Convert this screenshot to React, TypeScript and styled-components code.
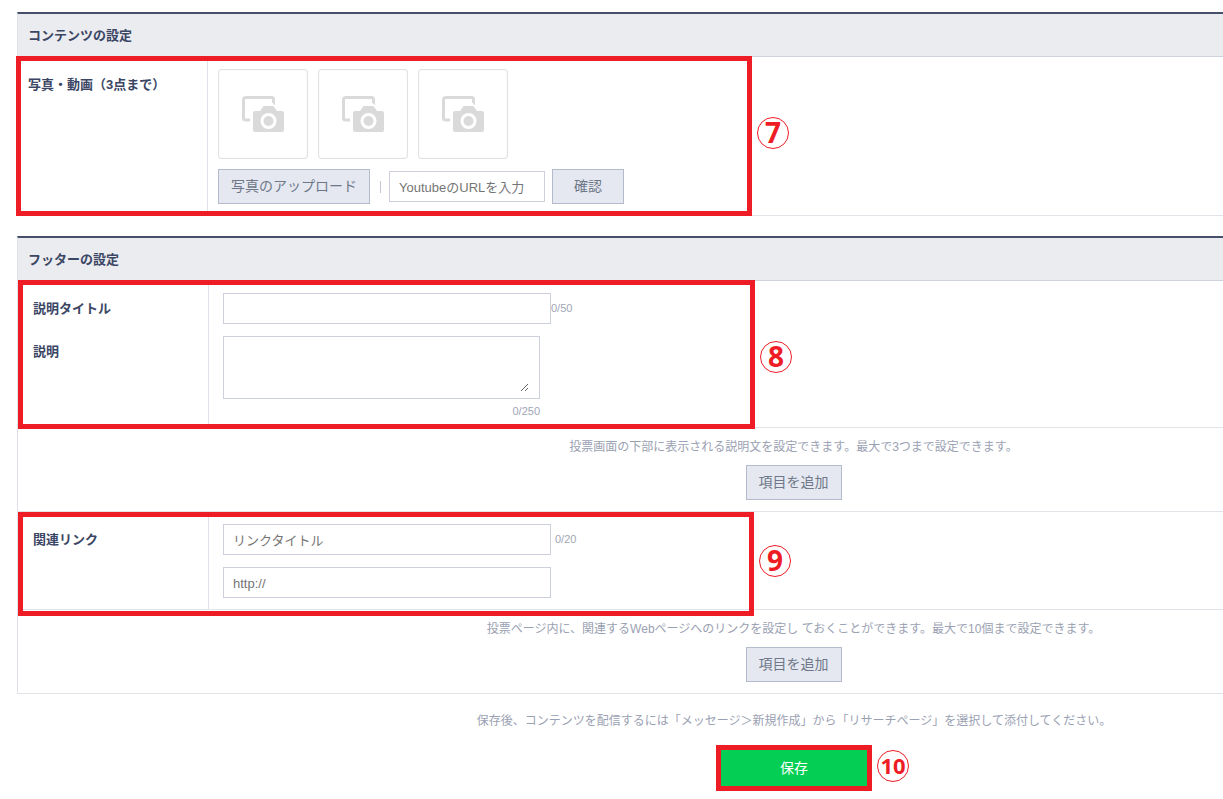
import React from "react";
import styled, { createGlobalStyle } from "styled-components";

const Global = createGlobalStyle`
  * { box-sizing: border-box; }
  body {
    margin: 0;
    background: #fff;
    color: #3b4664;
    font-family: "Liberation Sans", "Noto Sans CJK JP", sans-serif;
    font-size: 13px;
    line-height: 20px;
  }
  button, input, textarea { font-family: inherit; border-radius: 0; }
`;

const Page = styled.main`
  padding: 12px 0 8px 17px;
  overflow: hidden;
`;

const Card = styled.section`
  border-top: 2px solid #464f69;
  border-left: 1px solid #dfe1e8;
  margin-bottom: 20px;
`;

const CardTitle = styled.h2`
  margin: 0;
  padding: 12px 10px 10px;
  font-size: 13px;
  line-height: 20px;
  background: #ebecf0;
  border-bottom: 1px solid #ced2db;
`;

const Row = styled.div`
  position: relative;
  display: flex;
  border-bottom: 1px solid #e1e3e9;
`;

const Labels = styled.div<{ $wide?: boolean }>`
  display: flex;
  flex-direction: column;
  gap: 23px;
  flex: none;
  width: ${(p) => (p.$wide ? 191 : 190)}px;
  padding: 18px 0 0 ${(p) => (p.$wide ? 15 : 10)}px;
  border-right: 1px solid #dfe1e8;
  font-weight: bold;
`;

const Fields = styled.div<{ $wide?: boolean; $bottom?: number }>`
  display: flex;
  flex-direction: column;
  align-items: flex-start;
  gap: ${(p) => (p.$wide ? 12 : 10)}px;
  padding: 12px ${(p) => (p.$wide ? 14 : 10)}px ${(p) => p.$bottom ?? 11}px;
`;

const Line = styled.div<{ $gap?: number }>`
  display: flex;
  align-items: center;
  gap: ${(p) => p.$gap ?? 0}px;
`;

const Thumb = styled.div`
  display: flex;
  align-items: center;
  justify-content: center;
  width: 90px;
  height: 90px;
  border: 1px solid #e2e2e2;
  border-radius: 3px;
  box-shadow: inset 0 0 2px #eee;
`;

const Button = styled.button<{ $width: number }>`
  width: ${(p) => p.$width}px;
  height: 35px;
  padding: 0 0 2px;
  font-size: 14px;
  line-height: 20px;
  color: #6e7889;
  background: #e5e8f0;
  border: 1px solid #b4bccb;
`;

const Divider = styled.span`
  width: 1px;
  height: 12px;
  margin: 0 8px 0 10px;
  background: #c3c8d4;
`;

const TextInput = styled.input<{ $width: number }>`
  width: ${(p) => p.$width}px;
  height: 31px;
  padding: 2px 9px 0;
  font-size: 13px;
  border: 1px solid #cccfdc;
  background: #fff;
  &::placeholder { color: #757575; }
`;

const AreaBox = styled.div`
  width: 317px;
  height: 63px;
  padding: 5px 10px 6px 9px;
  border: 1px solid #cccfdc;
`;

const Area = styled.textarea`
  display: block;
  width: 100%;
  height: 100%;
  padding: 0;
  border: 0;
  outline: 0;
  font-size: 13px;
  background: transparent;
`;

const AreaField = styled.div`
  display: flex;
  flex-direction: column;
  align-items: flex-end;
  gap: 2px;
`;

const Counter = styled.span`
  padding-bottom: 2px;
  font-size: 11px;
  line-height: 20px;
  color: #a0a6b5;
`;

const Help = styled.div`
  display: flex;
  flex-direction: column;
  align-items: center;
  gap: 8px;
  padding: 9px 0 11px 346px;
  border-bottom: 1px solid #e1e3e9;
`;

const Note = styled.p`
  margin: 0;
  font-size: 12px;
  line-height: 20px;
  color: #9aa1b2;
`;

const Footer = styled.footer`
  display: flex;
  flex-direction: column;
  align-items: center;
  gap: 19px;
  padding-left: 348px;
  margin-top: -3px;
`;

const SaveWrap = styled.div`
  position: relative;
`;

const Save = styled.button`
  display: block;
  width: 146px;
  height: 36px;
  padding: 0 0 2px;
  border: 0;
  font-size: 14px;
  color: #fff;
  background: #04cf54;
`;

const Frame = styled.div<{ $top: number; $left: number; $bottom: number; $width: number }>`
  position: absolute;
  z-index: 1;
  top: ${(p) => p.$top}px;
  left: ${(p) => p.$left}px;
  bottom: ${(p) => p.$bottom}px;
  width: ${(p) => p.$width}px;
  border: 5px solid #ee1c25;
  pointer-events: none;
`;

const Mark = styled.span<{ $top: number; $small?: boolean }>`
  position: absolute;
  top: ${(p) => p.$top}px;
  left: 100%;
  display: flex;
  align-items: center;
  justify-content: center;
  width: 32px;
  height: 32px;
  margin-left: 10px;
  padding-bottom: 2px;
  border: 1px solid #ee1c25;
  border-radius: 50%;
  font-family: "Noto Sans", "Open Sans", sans-serif;
  font-size: ${(p) => (p.$small ? 22 : 28)}px;
  font-weight: bold;
  line-height: 28px;
  color: #ee1c25;
`;

const CameraIcon = () => (
  <svg width="42" height="36" viewBox="0 0 42 36" aria-hidden="true">
    <path
      d="M8 24H3.500A2 2 0 0 1 1.500 22V3.500A2 2 0 0 1 3.500 1.500H29.500A2 2 0 0 1 31.500 3.500V7"
      fill="none"
      stroke="#dadada"
      strokeWidth="3"
    />
    <path d="M30 6H33V9.500Z" fill="#dadada" />
    <path
      d="M13 15H18L21 10.800Q21.500 10 22.500 10H30.500Q31.500 10 32 10.800L35 15H40A2 2 0 0 1 42 17V34A2 2 0 0 1 40 36H13A2 2 0 0 1 11 34V17A2 2 0 0 1 13 15Z"
      fill="#dadada"
    />
    <circle cx="26.500" cy="25" r="6.500" fill="#dadada" stroke="#fff" strokeWidth="3" />
  </svg>
);

export default function App() {
  return (
    <>
      <Global />
      <Page>
        <Card>
          <CardTitle>コンテンツの設定</CardTitle>
          <Row>
            <Labels>
              <label htmlFor="youtube">写真・動画（3点まで）</label>
            </Labels>
            <Fields>
              <Line $gap={10}>
                {[0, 1, 2].map((n) => (
                  <Thumb key={n}>
                    <CameraIcon />
                  </Thumb>
                ))}
              </Line>
              <Line>
                <Button type="button" $width={152}>写真のアップロード</Button>
                <Divider />
                <Line $gap={7}>
                  <TextInput id="youtube" $width={156} placeholder="YoutubeのURLを入力" />
                  <Button type="button" $width={72}>確認</Button>
                </Line>
              </Line>
            </Fields>
            <Frame $top={-1} $left={-2} $bottom={-1} $width={736}>
              <Mark $top={56}>7</Mark>
            </Frame>
          </Row>
        </Card>

        <Card>
          <CardTitle>フッターの設定</CardTitle>
          <Row>
            <Labels $wide>
              <label htmlFor="title">説明タイトル</label>
              <label htmlFor="description">説明</label>
            </Labels>
            <Fields $wide $bottom={4}>
              <Line>
                <TextInput id="title" $width={328} />
                <Counter>0/50</Counter>
              </Line>
              <AreaField>
                <AreaBox>
                  <Area id="description" />
                </AreaBox>
                <Counter>0/250</Counter>
              </AreaField>
            </Fields>
            <Frame $top={-1} $left={0} $bottom={-2} $width={737}>
              <Mark $top={56}>8</Mark>
            </Frame>
          </Row>
          <Help>
            <Note>投票画面の下部に表示される説明文を設定できます。最大で3つまで設定できます。</Note>
            <Button type="button" $width={96}>項目を追加</Button>
          </Help>
          <Row>
            <Labels $wide>
              <label htmlFor="link-title">関連リンク</label>
            </Labels>
            <Fields $wide>
              <Line $gap={4}>
                <TextInput id="link-title" $width={328} placeholder="リンクタイトル" />
                <Counter>0/20</Counter>
              </Line>
              <TextInput aria-label="URL" $width={328} placeholder="http://" />
            </Fields>
            <Frame $top={0} $left={0} $bottom={-7} $width={736}>
              <Mark $top={28}>9</Mark>
            </Frame>
          </Row>
          <Help>
            <Note>投票ページ内に、関連するWebページへのリンクを設定し ておくことができます。最大で10個まで設定できます。</Note>
            <Button type="button" $width={96}>項目を追加</Button>
          </Help>
        </Card>

        <Footer>
          <Note>保存後、コンテンツを配信するには「メッセージ＞新規作成」から「リサーチページ」を選択して添付してください。</Note>
          <SaveWrap>
            <Save type="button">保存</Save>
            <Frame $top={-5} $left={-5} $bottom={-5} $width={156}>
              <Mark $top={0} $small>10</Mark>
            </Frame>
          </SaveWrap>
        </Footer>
      </Page>
    </>
  );
}
